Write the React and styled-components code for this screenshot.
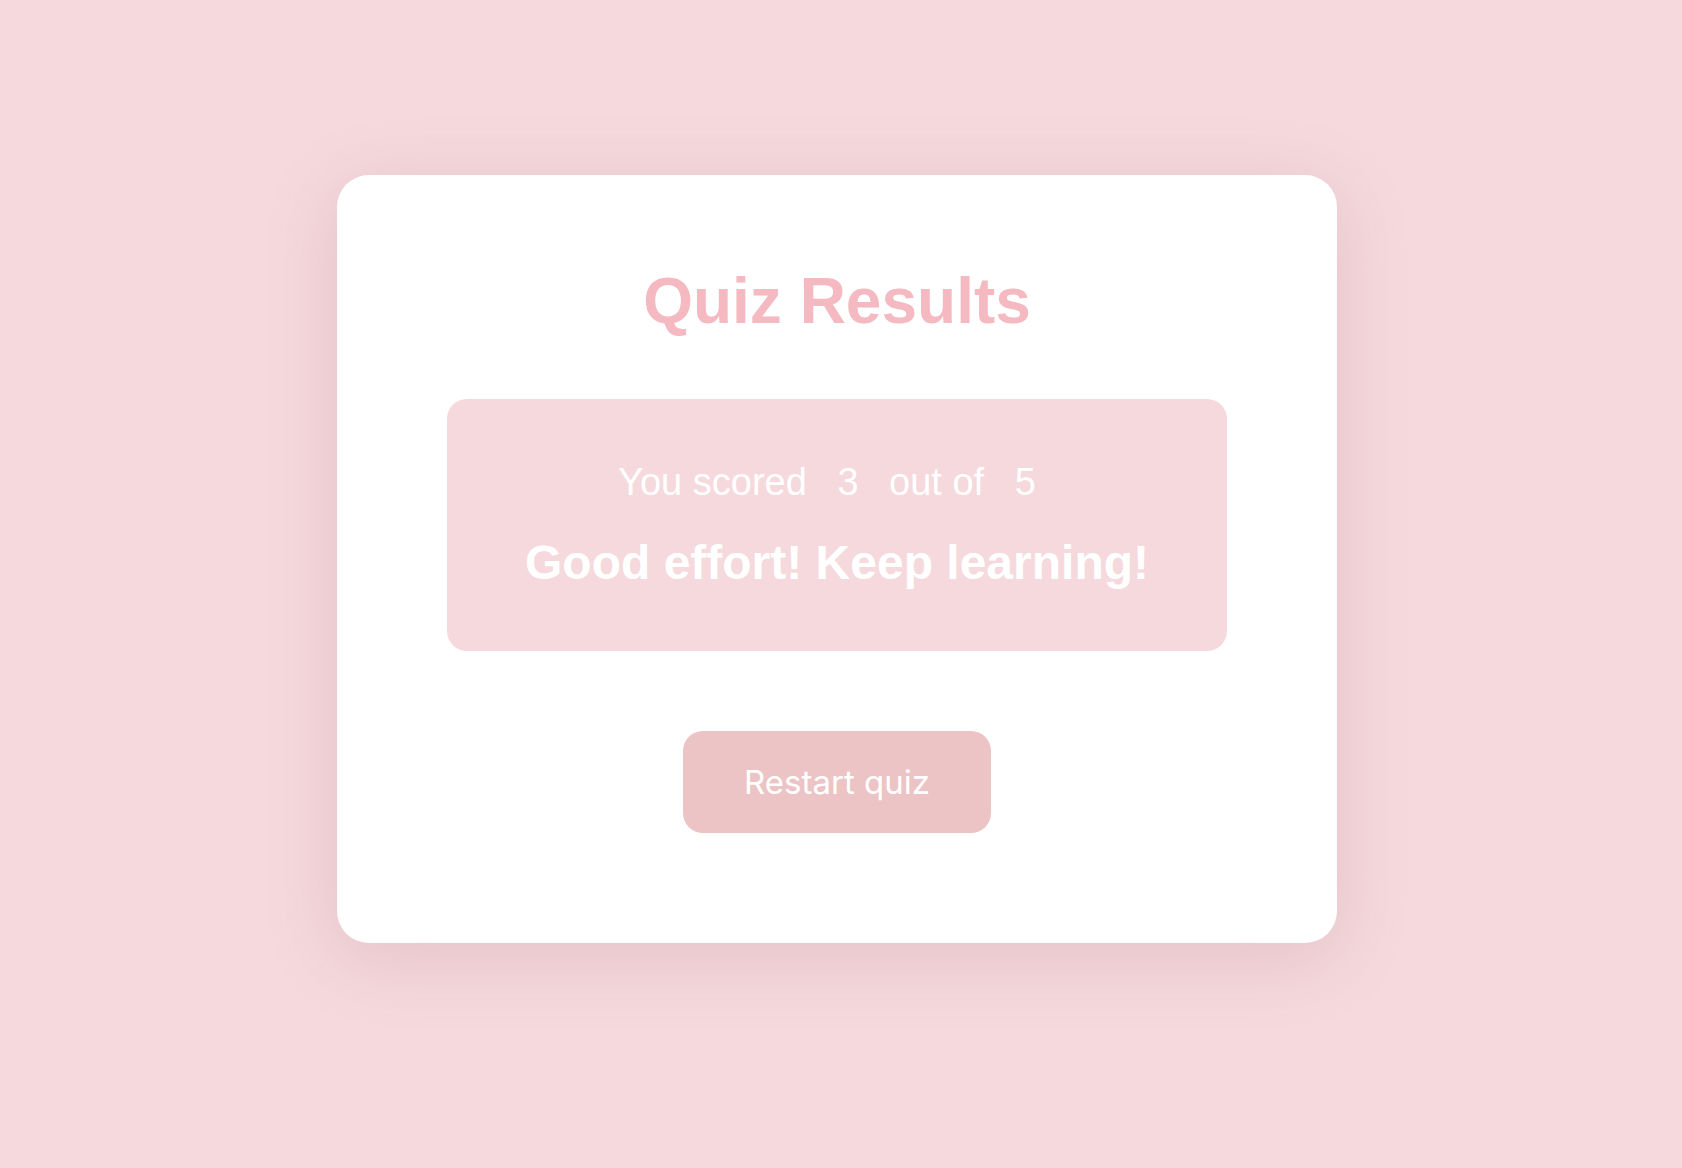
import React, { useState } from 'react';
import styled, { createGlobalStyle } from 'styled-components';

const GlobalStyle = createGlobalStyle`
    html, body {
        margin: 0;
        padding: 0;
        background: #f5d9dd;
    }
    body {
        font-family: "Liberation Sans", Arial, Helvetica, sans-serif;
    }
`

function App() {

    const [score] = useState(3);
    const total = 5;

    return (
        <Page>
            <GlobalStyle />
            <Card>
                <Title>Quiz Results</Title>
                <ResultBox>
                    <ScoreLine>
                        You scored <Num>{score}</Num> out of <Num>{total}</Num>
                    </ScoreLine>
                    <Message>Good effort! Keep learning!</Message>
                </ResultBox>
                <RestartButton>Restart quiz</RestartButton>
            </Card>
        </Page>
    )
}

export default App;


const Page = styled.div`

    min-height: 100vh;
    box-sizing: border-box;
    display: flex;
    justify-content: center;
    align-items: flex-start;
    padding: 175px 8px 0 0;
    background: #f5d9dd;

`

const Card = styled.div`

    width: 1000px;
    box-sizing: border-box;
    background: #ffffff;
    border-radius: 32px;
    padding: 90px 110px 110px;
    display: flex;
    flex-direction: column;
    align-items: center;
    box-shadow: 0 14px 70px rgba(170, 110, 120, 0.22);

`

const Title = styled.h1`

    margin: 0 0 60px;
    font-size: 64px;
    line-height: 73.6px;
    font-weight: 700;
    color: #f4b9c1;

`

const ResultBox = styled.div`

    width: 780px;
    box-sizing: border-box;
    background: #f5d9dd;
    border-radius: 20px;
    padding: 62px 20px 60px;
    display: flex;
    flex-direction: column;
    align-items: center;
    color: #ffffff;

`

const ScoreLine = styled.p`

    margin: 0 0 32px;
    font-size: 38px;
    line-height: 42px;

`

const Num = styled.span`

    margin: 0 20px;

`

const Message = styled.p`

    margin: 0;
    font-size: 48px;
    line-height: 56px;
    font-weight: 700;

`

const RestartButton = styled.button`

    margin-top: 80px;
    width: 308px;
    height: 102px;
    border: none;
    border-radius: 20px;
    background: #ecc4c5;
    color: #ffffff;
    font-family: Inter, "Noto Sans", sans-serif;
    font-size: 33px;
    cursor: pointer;

`
